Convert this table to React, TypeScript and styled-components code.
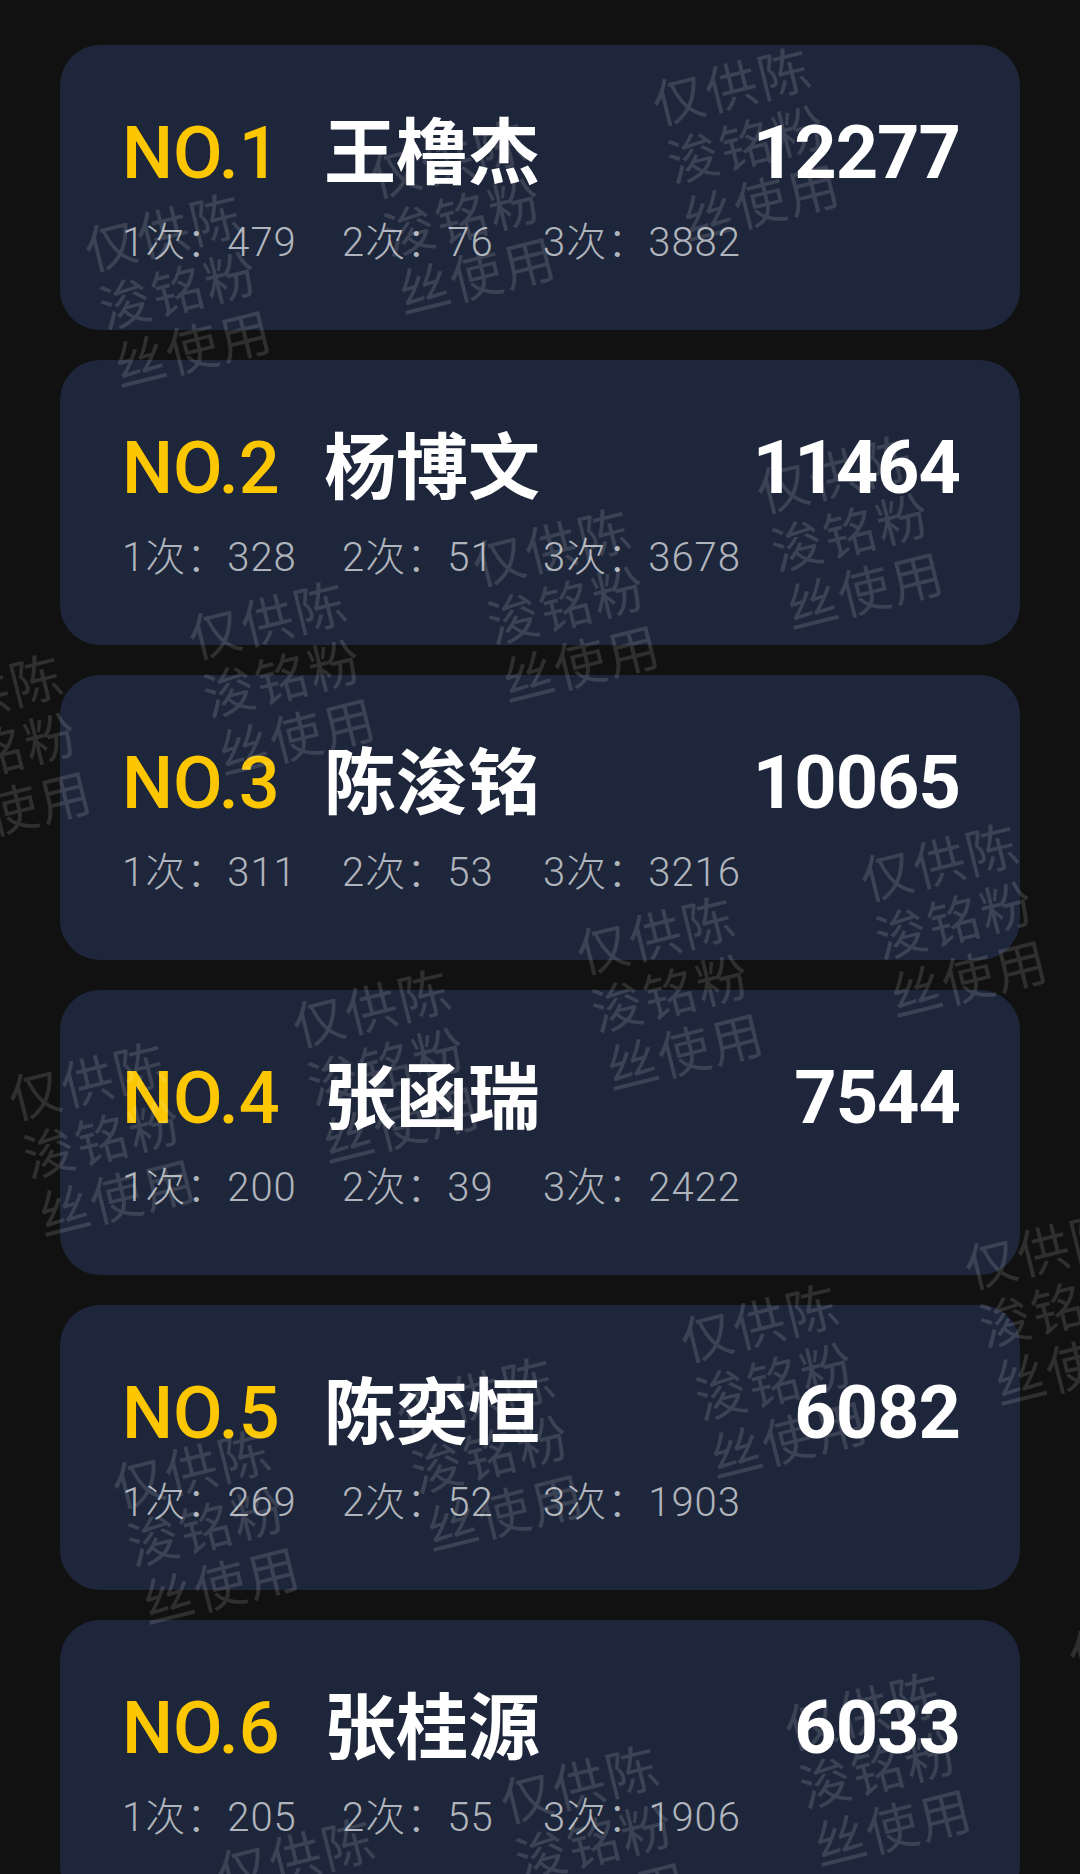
import React from "react";
import styled, { createGlobalStyle } from "styled-components";

const GlobalStyle = createGlobalStyle`
  html, body {
    margin: 0;
    padding: 0;
    background: #111111;
  }
`;

type Rank = {
  name: string;
  total: number;
  first: number;
  second: number;
  third: number;
};

const ranks: Rank[] = [
  { name: "王橹杰", total: 12277, first: 479, second: 76, third: 3882 },
  { name: "杨博文", total: 11464, first: 328, second: 51, third: 3678 },
  { name: "陈浚铭", total: 10065, first: 311, second: 53, third: 3216 },
  { name: "张函瑞", total: 7544, first: 200, second: 39, third: 2422 },
  { name: "陈奕恒", total: 6082, first: 269, second: 52, third: 1903 },
  { name: "张桂源", total: 6033, first: 205, second: 55, third: 1906 },
];

// watermark lattice, centres in page pixels; a few edge ones are absent in the shot
const skip = ["3,-1", "3,0", "-2,2", "-2,1"];
const marks: { x: number; y: number }[] = [];
for (let i = -4; i <= 6; i++) {
  for (let j = -3; j <= 6; j++) {
    if (skip.includes(`${i},${j}`)) continue;
    const x = 282 + 284 * i + 104 * j;
    const y = 676 - 73 * i + 388 * j;
    if (x > -160 && x < 1240 && y > -160 && y < 2040) marks.push({ x, y });
  }
}

export default function App() {
  return (
    <>
      <GlobalStyle />
      <Page>
        <List>
          {ranks.map((r, i) => (
            <Card key={r.name}>
              <Head>
                <No>NO.{i + 1}</No>
                <Name>{r.name}</Name>
                <Total>{r.total}</Total>
              </Head>
              <Counts>
                <Count>1次：{r.first}</Count>
                <Count>2次：{r.second}</Count>
                <Count>3次：{r.third}</Count>
              </Counts>
            </Card>
          ))}
        </List>
        <MarkLayer>
          {marks.map((m, i) => (
            <Mark key={i} style={{ left: m.x, top: m.y }}>
              <div>仅供陈</div>
              <div>浚铭粉</div>
              <div>丝使用</div>
            </Mark>
          ))}
        </MarkLayer>
      </Page>
    </>
  );
}

const Page = styled.div`
  position: relative;
  width: 1080px;
  height: 1874px;
  overflow: hidden;
  background: #111111;
`;

const List = styled.div`
  display: flex;
  flex-direction: column;
  gap: 30px;
  padding: 45px 60px 0 60px;
`;

const Card = styled.div`
  flex-shrink: 0;
  height: 285px;
  box-sizing: border-box;
  border-radius: 40px;
  background: #1d263a;
  padding: 66px 60px 0 62px;
  display: flex;
  flex-direction: column;
`;

const Head = styled.div`
  display: flex;
  align-items: baseline;
  height: 74px;
`;

const No = styled.div`
  width: 202px;
  flex-shrink: 0;
  font-family: Roboto, "Noto Sans", sans-serif;
  font-weight: 500;
  font-size: 72px;
  line-height: 72px;
  color: #fcc700;
`;

const Name = styled.div`
  font-family: "Noto Sans CJK SC", "Noto Sans", sans-serif;
  font-weight: 700;
  font-size: 72px;
  line-height: 72px;
  color: #ffffff;
`;

const Total = styled.div`
  margin-left: auto;
  font-family: Roboto, "Noto Sans", sans-serif;
  font-weight: 700;
  font-size: 74px;
  line-height: 72px;
  letter-spacing: -1px;
  color: #ffffff;
`;

const Counts = styled.div`
  display: grid;
  grid-template-columns: 220px 201px auto;
  margin-top: 38px;
`;

const Count = styled.div`
  font-family: Roboto, "Noto Sans CJK SC", sans-serif;
  font-weight: 300;
  font-size: 40px;
  line-height: 40px;
  letter-spacing: 1px;
  color: #b0b4bc;
  white-space: nowrap;
`;

const MarkLayer = styled.div`
  position: absolute;
  inset: 0;
  pointer-events: none;
  z-index: 5;
`;

const Mark = styled.div`
  position: absolute;
  width: 200px;
  transform: translate(-50%, -50%) rotate(-14deg);
  font-family: "Noto Sans CJK SC", sans-serif;
  font-weight: 400;
  font-size: 52px;
  line-height: 60px;
  letter-spacing: 2px;
  text-align: center;
  color: rgba(255, 255, 255, 0.13);
  white-space: nowrap;
`;
